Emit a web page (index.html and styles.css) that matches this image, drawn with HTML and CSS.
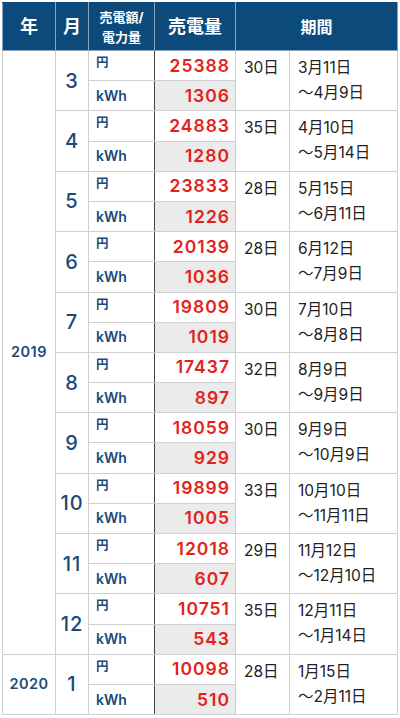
FILE: index.html
```html
<!DOCTYPE html>
<html lang="ja">
<head>
<meta charset="utf-8">
<link rel="stylesheet" href="styles.css">
</head>
<body>
<table class="tbl">
<colgroup>
<col class="w-year"><col class="w-mon"><col class="w-lab"><col class="w-val"><col class="w-days"><col class="w-per">
</colgroup>
<thead>
<tr><th class="h-big">年</th><th class="h-big">月</th><th class="h-small">売電額/<br>電力量</th><th class="h-big h-val">売電量</th><th class="h-mid" colspan="2">期間</th></tr>
</thead>
<tbody>
<tr><td class="year" rowspan="20">2019</td><td class="mon" rowspan="2">3</td><td class="lab yen">円</td><td class="val">25388</td><td class="days" rowspan="2">30日</td><td class="per" rowspan="2">3月11日<br>〜4月9日</td></tr>
<tr><td class="lab">kWh</td><td class="val kwh">1306</td></tr>
<tr><td class="mon" rowspan="2">4</td><td class="lab yen">円</td><td class="val">24883</td><td class="days" rowspan="2">35日</td><td class="per" rowspan="2">4月10日<br>〜5月14日</td></tr>
<tr><td class="lab">kWh</td><td class="val kwh">1280</td></tr>
<tr><td class="mon" rowspan="2">5</td><td class="lab yen">円</td><td class="val">23833</td><td class="days" rowspan="2">28日</td><td class="per" rowspan="2">5月15日<br>〜6月11日</td></tr>
<tr><td class="lab">kWh</td><td class="val kwh">1226</td></tr>
<tr><td class="mon" rowspan="2">6</td><td class="lab yen">円</td><td class="val">20139</td><td class="days" rowspan="2">28日</td><td class="per" rowspan="2">6月12日<br>〜7月9日</td></tr>
<tr><td class="lab">kWh</td><td class="val kwh">1036</td></tr>
<tr><td class="mon" rowspan="2">7</td><td class="lab yen">円</td><td class="val">19809</td><td class="days" rowspan="2">30日</td><td class="per" rowspan="2">7月10日<br>〜8月8日</td></tr>
<tr><td class="lab">kWh</td><td class="val kwh">1019</td></tr>
<tr><td class="mon" rowspan="2">8</td><td class="lab yen">円</td><td class="val">17437</td><td class="days" rowspan="2">32日</td><td class="per" rowspan="2">8月9日<br>〜9月9日</td></tr>
<tr><td class="lab">kWh</td><td class="val kwh">897</td></tr>
<tr><td class="mon" rowspan="2">9</td><td class="lab yen">円</td><td class="val">18059</td><td class="days" rowspan="2">30日</td><td class="per" rowspan="2">9月9日<br>〜10月9日</td></tr>
<tr><td class="lab">kWh</td><td class="val kwh">929</td></tr>
<tr><td class="mon" rowspan="2">10</td><td class="lab yen">円</td><td class="val">19899</td><td class="days" rowspan="2">33日</td><td class="per" rowspan="2">10月10日<br>〜11月11日</td></tr>
<tr><td class="lab">kWh</td><td class="val kwh">1005</td></tr>
<tr><td class="mon" rowspan="2">11</td><td class="lab yen">円</td><td class="val">12018</td><td class="days" rowspan="2">29日</td><td class="per" rowspan="2">11月12日<br>〜12月10日</td></tr>
<tr><td class="lab">kWh</td><td class="val kwh">607</td></tr>
<tr><td class="mon" rowspan="2">12</td><td class="lab yen">円</td><td class="val">10751</td><td class="days" rowspan="2">35日</td><td class="per" rowspan="2">12月11日<br>〜1月14日</td></tr>
<tr><td class="lab">kWh</td><td class="val kwh">543</td></tr>
<tr><td class="year" rowspan="2">2020</td><td class="mon" rowspan="2">1</td><td class="lab yen">円</td><td class="val">10098</td><td class="days" rowspan="2">28日</td><td class="per" rowspan="2">1月15日<br>〜2月11日</td></tr>
<tr><td class="lab">kWh</td><td class="val kwh">510</td></tr>
</tbody>
</table>
</body>
</html>
```

FILE: styles.css
```css
html, body {
  margin: 0;
  padding: 0;
  background: #fff;
}
body {
  padding: 2px 0 0 2px;
  font-family: "Inter", "Noto Sans CJK JP", sans-serif;
}
.tbl {
  border-collapse: collapse;
  table-layout: fixed;
  width: 395px;
}
.w-year { width: 53px; }
.w-mon { width: 33px; }
.w-lab { width: 66px; }
.w-val { width: 81px; }
.w-days { width: 54px; }
.w-per { width: 108px; }

.tbl th {
  background: #0d4a7c;
  color: #fff;
  height: 47px;
  padding: 0;
  border: 1px solid #8aa4bd;
  border-top-color: #0d4a7c;
  text-align: center;
  vertical-align: middle;
  font-weight: bold;
  line-height: 20px;
}
.h-big { font-size: 18px; }
.h-mid { font-size: 16px; }
.h-small { font-size: 13px; line-height: 20px !important; }

.tbl tbody tr {
  height: 30.2px;
}
.tbl td {
  border: 1px solid #cfcfcf;
  padding: 0;
  vertical-align: middle;
  line-height: 18px;
  overflow: hidden;
}
.year {
  text-align: center;
  color: #1c4a78;
  font-weight: 600;
  font-size: 14.5px;
  letter-spacing: 0.5px;
}
.mon {
  text-align: center;
  color: #1c4a78;
  font-size: 20px;
  font-weight: 500;
  letter-spacing: 1px;
}
.lab {
  color: #1c4a78;
  font-size: 14px;
  font-weight: 600;
  padding-left: 7px !important;
  border-right: 1px solid #444 !important;
}
.lab.yen {
  font-size: 12.5px;
  font-weight: bold;
  vertical-align: top !important;
  padding-top: 3px !important;
}
.val {
  text-align: right;
  color: #e2231a;
  font-size: 17.5px;
  font-weight: 600;
  letter-spacing: 1px;
  padding-right: 5px !important;
}
.val.kwh {
  background: #ebebeb;
}
.days {
  vertical-align: top !important;
  padding: 4px 0 0 8px !important;
  font-size: 15.5px;
  line-height: 25px !important;
  color: #222;
}
.per {
  vertical-align: top !important;
  padding: 4px 0 0 8px !important;
  font-size: 15.5px;
  line-height: 25px !important;
  color: #222;
  white-space: nowrap;
}
```
